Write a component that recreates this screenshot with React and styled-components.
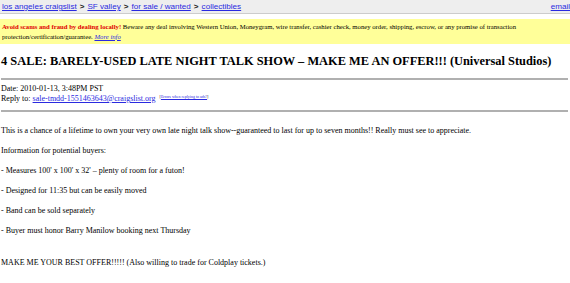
import React from "react";
import styled, { createGlobalStyle } from "styled-components";

const Global = createGlobalStyle`
  html, body { margin: 0; padding: 0; background: #fff; }
  body { font-family: "Liberation Serif", "Times New Roman", serif; color: #000; }
`;

const Page = styled.div`
  width: 570px;
  height: 283px;
  overflow: hidden;
  display: flex;
  flex-direction: column;
`;

const TopBar = styled.div`
  display: flex;
  justify-content: space-between;
  align-items: center;
  height: 13px;
  padding: 0 0 0 2px;
  background: #eeeeee;
  border-bottom: 1px solid #cccccc;
  font-family: "Liberation Sans", Arial, sans-serif;
  font-size: 8.1px;
  white-space: nowrap;
`;

const Crumbs = styled.div`
  display: flex;
  gap: 3px;
  align-items: baseline;
`;

const NavLink = styled.a`
  color: #2a2ae0;
  text-decoration: underline;
`;

const Sep = styled.span`
  font-weight: bold;
  color: #222;
`;

const Banner = styled.div`
  margin-top: 5px;
  background: #ffff99;
  padding: 3px 40px 3px 2px;
  font-size: 6.7px;
  line-height: 9.5px;
`;

const Warn = styled.b`
  color: #e00000;
`;

const MoreInfo = styled.a`
  color: #2a2ae0;
  font-family: "Liberation Serif", serif;
  font-style: italic;
  text-decoration: underline;
`;

const Content = styled.div`
  padding: 0 2px 0 1px;
`;

const Title = styled.h2`
  margin: 9px 0 0;
  font-size: 12.4px;
  font-weight: bold;
  line-height: 16px;
  white-space: nowrap;
`;

const Rule = styled.hr`
  border: none;
  height: 2px;
  background: #b0b0b0;
  margin: ${(p) => p.$top}px 0 0;
`;

const Meta = styled.div`
  margin-top: 4px;
  font-size: 8px;
  line-height: 10px;
`;

const Mail = styled.a`
  color: #2a2ae0;
  text-decoration: underline;
`;

const Tiny = styled.span`
  font-size: 4px;
  line-height: 0;
  vertical-align: 3px;
  margin-left: 4px;
  a { color: #2a2ae0; }
`;

const Body = styled.div`
  margin-top: 14px;
  font-size: 8px;
  line-height: 10px;
`;

const Para = styled.p`
  margin: 0 0 ${(p) => p.$gap || 10}px;
`;

export default function App() {
  return (
    <Page>
      <Global />
      <TopBar>
        <Crumbs>
          <NavLink href="#">los angeles craigslist</NavLink>
          <Sep>&gt;</Sep>
          <NavLink href="#">SF valley</NavLink>
          <Sep>&gt;</Sep>
          <NavLink href="#">for sale / wanted</NavLink>
          <Sep>&gt;</Sep>
          <NavLink href="#">collectibles</NavLink>
        </Crumbs>
        <NavLink href="#">email</NavLink>
      </TopBar>
      <Banner>
        <Warn>Avoid scams and fraud by dealing locally!</Warn> Beware any deal involving Western Union,
        Moneygram, wire transfer, cashier check, money order, shipping, escrow, or any promise of transaction
        protection/certification/guarantee. <MoreInfo href="#">More info</MoreInfo>
      </Banner>
      <Content>
        <Title>4 SALE: BARELY-USED LATE NIGHT TALK SHOW – MAKE ME AN OFFER!!! (Universal Studios)</Title>
        <Rule $top={9} />
        <Meta>
          Date: 2010-01-13, 3:48PM PST
          <br />
          Reply to: <Mail href="#">sale-tmdd-1551463643@craigslist.org</Mail>
          <Tiny>
            [<a href="#">Errors when replying to ads?</a>]
          </Tiny>
        </Meta>
        <Rule $top={6} />
        <Body>
          <Para>
            This is a chance of a lifetime to own your very own late night talk show--guaranteed to last for up to
            seven months!! Really must see to appreciate.
          </Para>
          <Para>Information for potential buyers:</Para>
          <Para>- Measures 100' x 100' x 32' – plenty of room for a futon!</Para>
          <Para>- Designed for 11:35 but can be easily moved</Para>
          <Para>- Band can be sold separately</Para>
          <Para $gap={22}>- Buyer must honor Barry Manilow booking next Thursday</Para>
          <Para>MAKE ME YOUR BEST OFFER!!!!! (Also willing to trade for Coldplay tickets.)</Para>
        </Body>
      </Content>
    </Page>
  );
}
